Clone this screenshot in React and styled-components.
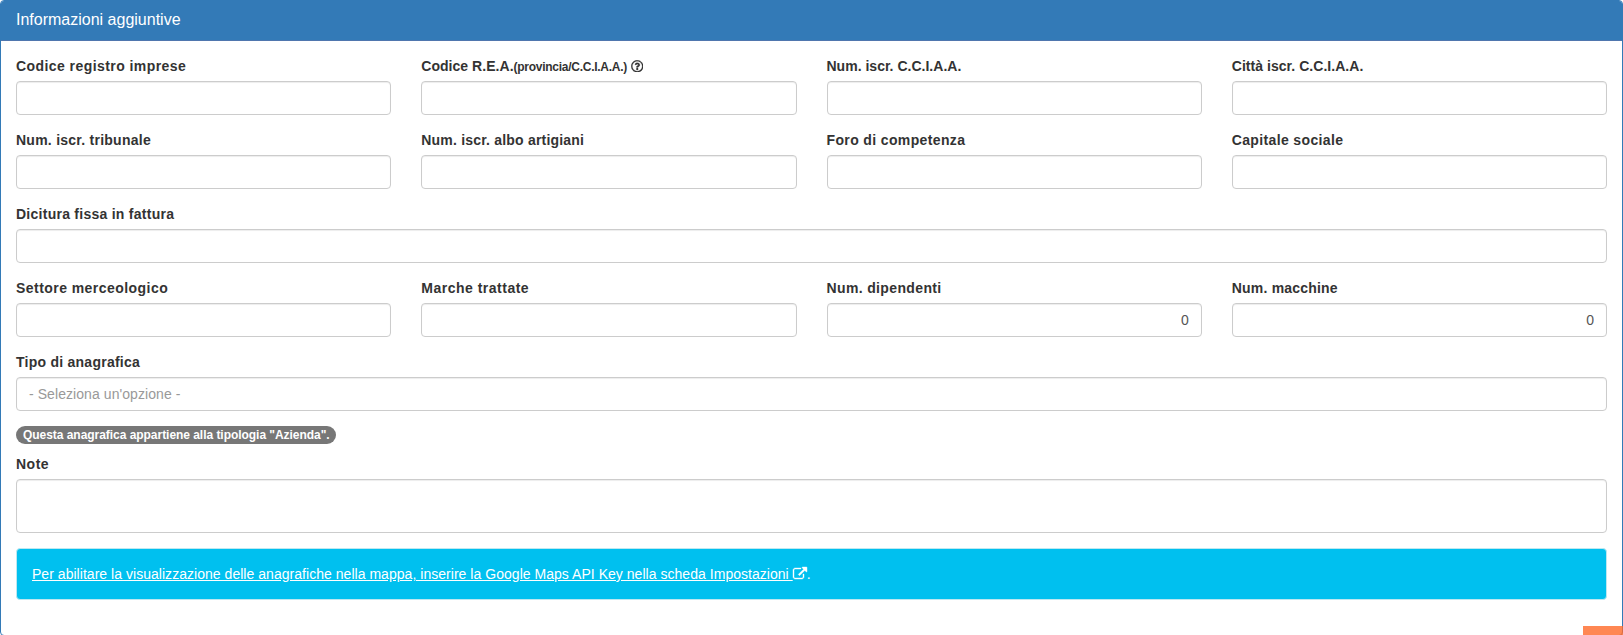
import React from "react";
import styled, { createGlobalStyle } from "styled-components";
import { FaRegQuestionCircle } from "react-icons/fa";

const GlobalStyle = createGlobalStyle`
  *, *::before, *::after { box-sizing: border-box; }
  body {
    margin: 0;
    background: #fff;
    color: #333;
    font: 14px/20px "Liberation Sans", Arial, sans-serif;
  }
`;

const Page = styled.main`
  position: relative;
  height: 635px;
  overflow: hidden;
`;

const Panel = styled.section`
  height: 636px;
  border: 1px solid #337ab7;
  border-radius: 4px;
  background: #fff;
`;

const PanelHeader = styled.header`
  height: 40px;
  padding: 9px 15px;
  border-bottom: 1px solid #4f76ae;
  border-radius: 3px 3px 0 0;
  background: #337ab7;
  color: #fff;
`;

const PanelTitle = styled.h3`
  margin: 0;
  font-size: 16px;
  font-weight: 400;
  line-height: 19px;
`;

const PanelBody = styled.form`
  padding: 15px;
`;

const Row = styled.div`
  display: grid;
  grid-template-columns: repeat(${(p) => p.$cols || 1}, minmax(0, 1fr));
  column-gap: 30px;
  margin-bottom: 15px;
`;

const Field = styled.div`
  display: flex;
  flex-direction: column;
`;

const Label = styled.label`
  display: flex;
  align-items: center;
  height: 20px;
  margin-bottom: 5px;
  font-weight: 700;
  letter-spacing: ${(p) => p.$spacing ?? 0.3}px;
  white-space: nowrap;
`;

const Hint = styled.small`
  margin-right: 4px;
  padding-top: 1px;
  font-size: 12px;
  letter-spacing: -0.27px;
`;

const HelpIcon = styled(FaRegQuestionCircle)`
  width: 12.5px;
  height: 12.5px;
  stroke: currentColor;
  stroke-width: 10px;
`;

const control = `
  width: 100%;
  border: 1px solid #ccc;
  border-radius: 4px;
  background: #fff;
  box-shadow: inset 0 1px 1px rgba(0, 0, 0, 0.075);
  color: #555;
  font: 14px/20px "Liberation Sans", Arial, sans-serif;
`;

const Input = styled.input`
  ${control}
  height: 34px;
  padding: 6px 12px;
  text-align: ${(p) => p.$align || "left"};
`;

const Select = styled.div`
  ${control}
  height: 34px;
  padding: 6px 12px;
  color: #999;
  letter-spacing: 0.07px;
`;

const TextArea = styled.textarea`
  ${control}
  display: block;
  height: 54px;
  padding: 6px 12px;
  resize: none;
`;

const Badge = styled.span`
  display: block;
  width: 320px;
  height: 18px;
  margin-bottom: 10px;
  padding: 3px 7px;
  border-radius: 10px;
  background: #777;
  color: #fff;
  font-size: 12px;
  font-weight: 700;
  line-height: 12px;
  letter-spacing: -0.04px;
  white-space: nowrap;
`;

const Alert = styled.div`
  display: flex;
  align-items: center;
  height: 52px;
  padding: 0 15px;
  border: 1px solid #bce8f1;
  border-radius: 4px;
  background: #00c0ef;
  color: #fff;
`;

const AlertLink = styled.a`
  color: #fff;
  letter-spacing: 0.035px;
  text-decoration: underline;
  white-space: pre;
`;

const LinkIcon = styled.svg`
  width: 14px;
  height: 14px;
  overflow: visible;
  fill: currentColor;
  stroke: currentColor;
  stroke-width: 50px;
`;

const CornerButton = styled.div`
  position: absolute;
  right: 0;
  bottom: 0;
  width: 40px;
  height: 9px;
  background: rgba(255, 105, 40, 0.8);
`;

const ExternalLink = () => (
  <LinkIcon viewBox="0 0 1792 1792">
    <path d="M1408 928v320q0 119-84.5 203.5t-203.5 84.5h-832q-119 0-203.5-84.5t-84.5-203.5v-832q0-119 84.5-203.5t203.5-84.5h704q14 0 23 9t9 23v64q0 14-9 23t-23 9h-704q-66 0-113 47t-47 113v832q0 66 47 113t113 47h832q66 0 113-47t47-113v-320q0-14 9-23t23-9h64q14 0 23 9t9 23zm384-864v512q0 26-19 45t-45 19-45-19l-176-176-652 652q-10 10-23 10t-23-10l-114-114q-10-10-10-23t10-23l652-652-176-176q-19-19-19-45t19-45 45-19h512q26 0 45 19t19 45z" />
  </LinkIcon>
);

const rows = [
  [
    { label: "Codice registro imprese", spacing: 0.43 },
    { label: "Codice R.E.A.", spacing: 0.04, hint: "(provincia/C.C.I.A.A.)" },
    { label: "Num. iscr. C.C.I.A.A.", spacing: 0.01 },
    { label: "Città iscr. C.C.I.A.A.", spacing: 0.04 },
  ],
  [
    { label: "Num. iscr. tribunale", spacing: 0.25 },
    { label: "Num. iscr. albo artigiani", spacing: 0.2 },
    { label: "Foro di competenza", spacing: 0.37 },
    { label: "Capitale sociale", spacing: 0.36 },
  ],
  [{ label: "Dicitura fissa in fattura", spacing: 0.26 }],
  [
    { label: "Settore merceologico", spacing: 0.45 },
    { label: "Marche trattate", spacing: 0.5 },
    { label: "Num. dipendenti", spacing: 0.36, value: "0" },
    { label: "Num. macchine", spacing: 0.2, value: "0" },
  ],
];

export default function App() {
  return (
    <Page>
      <GlobalStyle />
      <Panel>
        <PanelHeader>
          <PanelTitle>Informazioni aggiuntive</PanelTitle>
        </PanelHeader>
        <PanelBody>
          {rows.map((fields) => (
            <Row key={fields[0].label} $cols={fields.length}>
              {fields.map((f) => (
                <Field key={f.label}>
                  <Label $spacing={f.spacing}>
                    {f.label}
                    {f.hint && <Hint>{f.hint}</Hint>}
                    {f.hint && <HelpIcon />}
                  </Label>
                  <Input defaultValue={f.value} $align={f.value && "right"} />
                </Field>
              ))}
            </Row>
          ))}
          <Row>
            <Field>
              <Label $spacing={0.25}>Tipo di anagrafica</Label>
              <Select>- Seleziona un'opzione -</Select>
            </Field>
          </Row>
          <Badge>Questa anagrafica appartiene alla tipologia "Azienda".</Badge>
          <Row>
            <Field>
              <Label $spacing={0.5}>Note</Label>
              <TextArea />
            </Field>
          </Row>
          <Alert>
            <AlertLink>Per abilitare la visualizzazione delle anagrafiche nella mappa, inserire la Google Maps API Key nella scheda Impostazioni </AlertLink>
            <ExternalLink />.
          </Alert>
        </PanelBody>
      </Panel>
      <CornerButton />
    </Page>
  );
}
